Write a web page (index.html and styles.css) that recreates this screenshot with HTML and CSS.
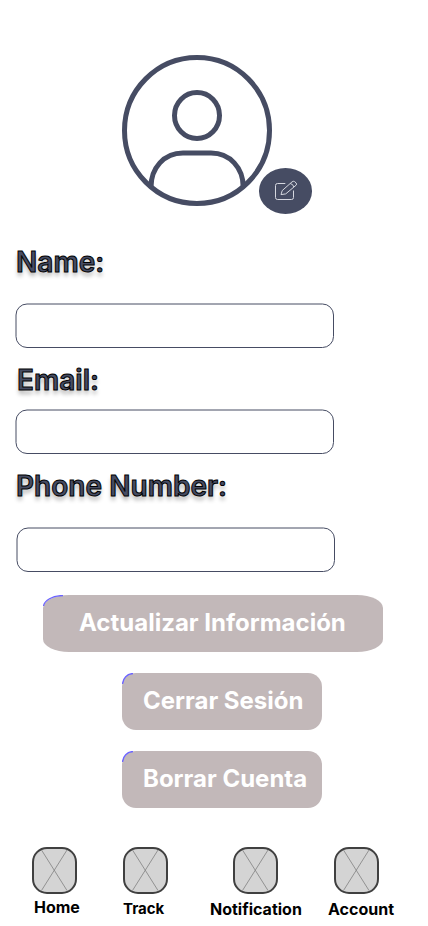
FILE: index.html
```html
<!DOCTYPE html>
<html lang="es">
<head>
<meta charset="utf-8">
<meta name="viewport" content="width=device-width, initial-scale=1">
<title>Account</title>
<link rel="stylesheet" href="styles.css">
</head>
<body>
<main class="screen">
  <header class="profile">
    <svg class="avatar" viewBox="0 0 150 152" fill="none" stroke="#464c63" stroke-width="5">
      <ellipse cx="75" cy="75.500" rx="72.500" ry="73"/>
      <ellipse cx="75" cy="60.500" rx="22.500" ry="23"/>
      <path d="M29 132C29 113 42 98 61 98H89C108 98 121.200 113 121.200 132"/>
    </svg>
    <button class="edit" aria-label="Edit">
      <svg class="edit-icon" viewBox="0 0 24 22" fill="none" stroke="#d5d7df" stroke-width="1">
        <path d="M11.300 3.500H3.500Q1.500 3.500 1.500 5.500V17.500Q1.500 19.500 3.500 19.500H17.500Q19.500 19.500 19.500 17.500V10.500"/>
        <path d="M7 14.600L8.200 10.600L18 1.900Q19.300 .8 20.600 1.600L22 2.900Q23.200 4.100 22.100 5.200L11.700 13.900Z M16.200 3.500Q18.800 3.800 19.900 7"/>
      </svg>
    </button>
  </header>

  <form class="form">
    <label class="label label-name">Name:</label>
    <svg class="field field-name" viewBox="0 0 320 46"><rect x="1" y="1" width="317.500" height="43.500" rx="11"/></svg>
    <label class="label label-email">Email:</label>
    <svg class="field field-email" viewBox="0 0 320 46"><rect x="1" y="1" width="317.500" height="43.500" rx="11"/></svg>
    <label class="label label-phone">Phone Number:</label>
    <svg class="field field-phone" viewBox="0 0 320 46"><rect x="1" y="1" width="317.500" height="43.500" rx="11"/></svg>
  </form>

  <div class="actions">
    <button class="action action-wide"><svg class="accent" viewBox="0 0 26 14"><path d="M.5 11C1.500 5.500 9 .7 20 .5"/></svg><span class="t-update">Actualizar Información</span></button>
    <button class="action"><svg class="accent" viewBox="0 0 26 14"><path d="M.5 11C1 5.500 5 .7 11 .5"/></svg><span class="t-logout">Cerrar Sesión</span></button>
    <button class="action"><svg class="accent" viewBox="0 0 26 14"><path d="M.5 11C1 5.500 5 .7 11 .5"/></svg><span class="t-delete">Borrar Cuenta</span></button>
  </div>

  <nav class="nav">
    <a class="tab tab-home"><svg class="tab-icon" viewBox="0 0 45 47"><rect x="1" y="1" width="43" height="45" rx="14"/><path d="M9.500 3L35 43.500M35 3L9.500 43.500"/></svg><span class="t-home">Home</span></a>
    <a class="tab tab-track"><svg class="tab-icon" viewBox="0 0 45 47"><rect x="1" y="1" width="43" height="45" rx="14"/><path d="M9.500 3L35 43.500M35 3L9.500 43.500"/></svg><span class="t-track">Track</span></a>
    <a class="tab tab-notification"><svg class="tab-icon" viewBox="0 0 45 47"><rect x="1" y="1" width="43" height="45" rx="14"/><path d="M9.500 3L35 43.500M35 3L9.500 43.500"/></svg><span class="t-notification">Notification</span></a>
    <a class="tab tab-account"><svg class="tab-icon" viewBox="0 0 45 47"><rect x="1" y="1" width="43" height="45" rx="14"/><path d="M9.500 3L35 43.500M35 3L9.500 43.500"/></svg><span class="t-account">Account</span></a>
  </nav>
</main>
</body>
</html>
```
FILE: styles.css
```css
* { box-sizing: border-box; }
body { margin: 0; background: #fff; font-family: Inter, "Liberation Sans", sans-serif; }
svg { display: block; flex: none; }
button { border: 0; padding: 0; font: inherit; }

.screen { width: 428px; height: 926px; display: flex; flex-direction: column; overflow: hidden; }

.profile { position: relative; height: 245px; padding: 55px 0 0 122px; }
.avatar { width: 150px; height: 152px; }
.edit {
  position: absolute; left: 259px; top: 168px;
  width: 53px; height: 45.5px; border-radius: 50%;
  background: #464c63; display: flex; align-items: center; justify-content: center;
}
.edit-icon { width: 24px; height: 22px; margin-left: 1px; }

.form { height: 350px; display: flex; flex-direction: column; align-items: flex-start; }
.label {
  height: 34px; margin-left: 16px;
  font-size: 28px; line-height: 34px; font-weight: 600; white-space: nowrap;
  letter-spacing: .03px;
  color: #464c63; -webkit-text-stroke: 1px #000;
  text-shadow: 0 4px 4px rgba(0, 0, 0, .3);
}
.label-email { margin: 14px 0 0 17px; }
.label-phone { margin-top: 14px; }
.field { width: 320px; height: 46px; margin-left: 15px; }
.field rect { fill: #fff; stroke: #464c63; stroke-width: 1; }
.field-name { margin-top: 24px; }
.field-email { margin-top: 12px; }
.field-phone { margin: 24px 0 0 16px; }

.actions { display: flex; flex-direction: column; gap: 21px; }
.action {
  position: relative; width: 200px; height: 57px; margin-left: 122px; padding: 0 0 2px 21px;
  display: flex; align-items: center; border-radius: 14px;
  background: #c2b8b9; color: #fff; font-size: 24px; font-weight: 700; line-height: 29px; white-space: nowrap;
}
.action-wide { width: 340px; margin-left: 43px; padding-left: 36px; border-radius: 26px / 13px; }
.accent { position: absolute; left: 0; top: 0; width: 26px; height: 14px; }
.accent path { fill: none; stroke: #6b63ff; stroke-width: 1.3; }

.nav { display: flex; align-items: flex-start; padding-top: 39px; margin-left: 32px; }
.tab { display: flex; flex-direction: column; width: 91px; font-size: 16px; line-height: 20px; font-weight: 700; color: #000; white-space: nowrap; }
.tab-icon { width: 45px; height: 47px; }
.tab-icon rect { fill: #d4d4d4; stroke: #404040; stroke-width: 2; }
.tab-icon path { fill: none; stroke: #808080; stroke-width: .8; }
.tab .t-home { margin: 3px 0 0 2px; }
.tab .t-track { margin-top: 5px; font-size: 15px; }
.tab-notification { width: 101px; margin-left: 19px; }
.tab .t-notification { margin: 5px 0 0 -23px; }
.tab .t-account { margin: 5px 0 0 -6px; }
```
